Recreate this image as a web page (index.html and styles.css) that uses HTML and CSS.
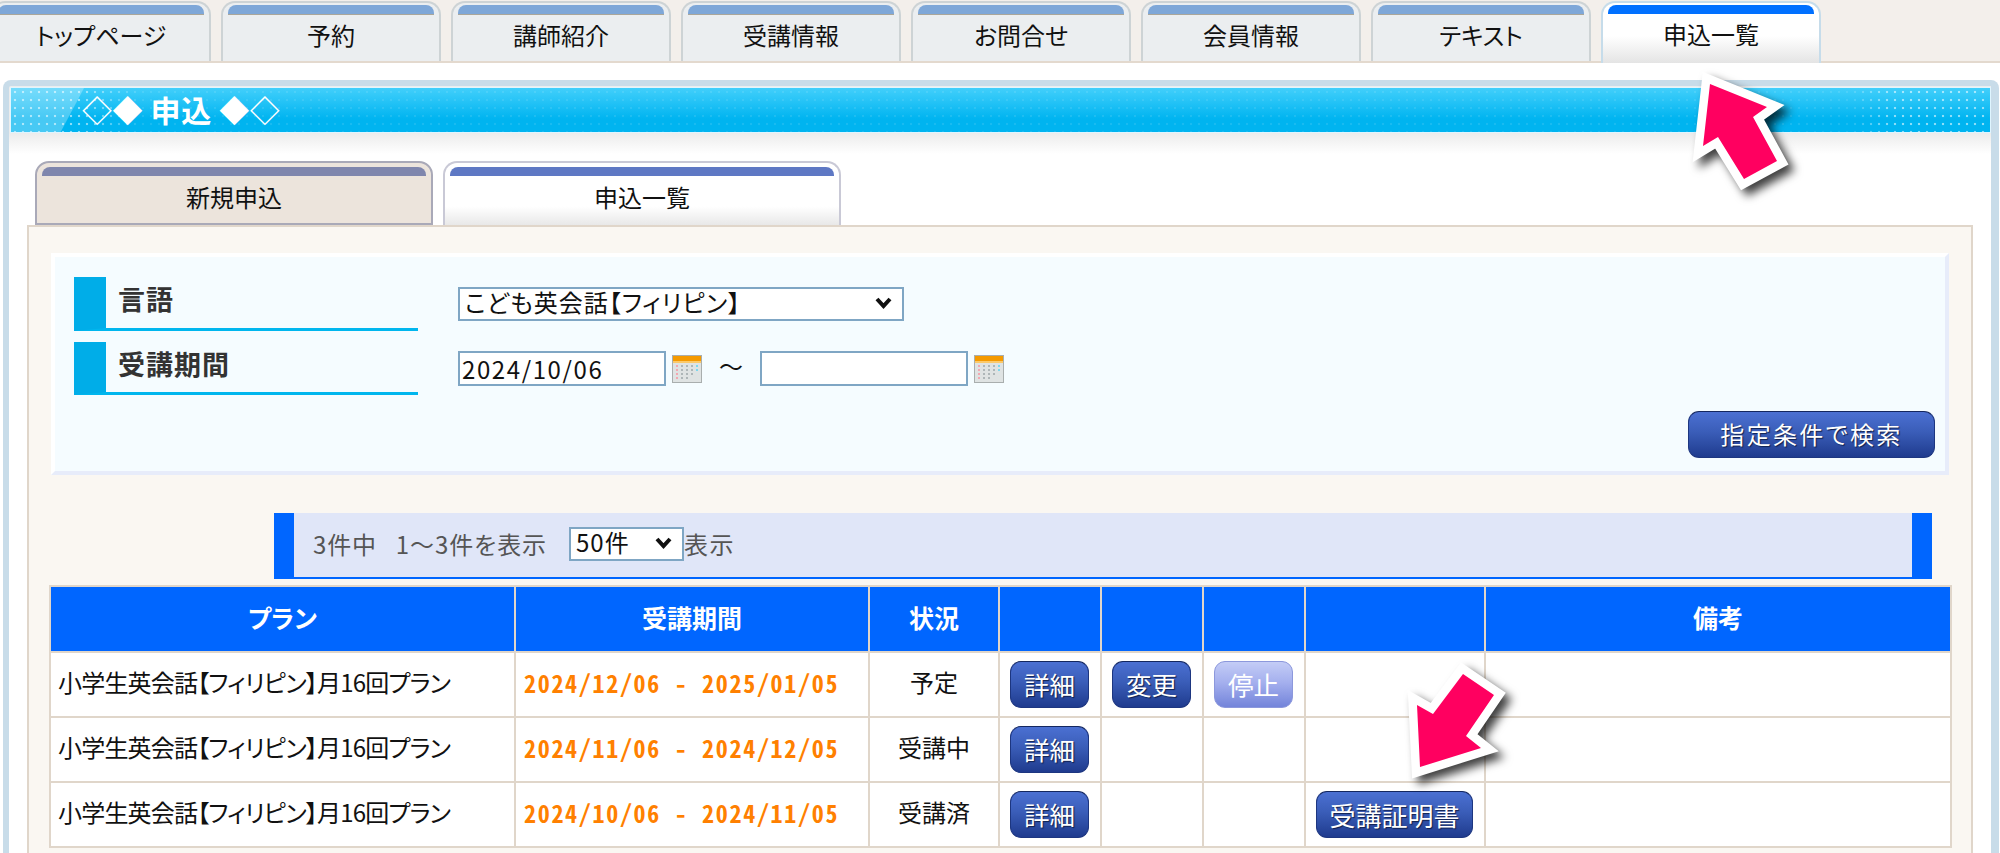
FILE: index.html
```html
<!DOCTYPE html>
<html lang="ja">
<head>
<meta charset="utf-8">
<title>申込一覧</title>
<link rel="stylesheet" href="styles.css">
</head>
<body>
<nav class="topnav">
  <a class="navtab">トップページ</a>
  <a class="navtab">予約</a>
  <a class="navtab">講師紹介</a>
  <a class="navtab">受講情報</a>
  <a class="navtab">お問合せ</a>
  <a class="navtab">会員情報</a>
  <a class="navtab">テキスト</a>
  <a class="navtab navtab-active">申込一覧</a>
</nav>
<main class="panel">
  <h1 class="title">◇◆ 申込 ◆◇</h1>
  <div class="subtabs">
    <a class="subtab">新規申込</a>
    <a class="subtab subtab-active">申込一覧</a>
  </div>
  <section class="box">
    <form class="search">
      <div class="fields">
        <div class="label">言語</div>
        <div class="ctrl ctrl-lang">
          <span class="selwrap">
            <select class="sel sel-lang"><option>こども英会話【フィリピン】</option></select>
            <svg class="chev" viewBox="0 0 17 12" aria-hidden="true"><path d="M2 2 L8.5 9 L15 2" fill="none" stroke="#111" stroke-width="4"/></svg>
          </span>
        </div>
        <div class="label">受講期間</div>
        <div class="ctrl ctrl-date">
          <input class="date" type="text" value="2024/10/06">
          <svg class="cal" viewBox="0 0 30 28" aria-hidden="true">
            <rect x="0.5" y="0.5" width="29" height="27" fill="#dfe3e3" stroke="#a9aeae"/>
            <rect x="1" y="1" width="28" height="5" fill="#f59a00"/>
            <rect x="1" y="6" width="28" height="2" fill="#fbc96a"/>
            <g class="cal-grey"><rect x="9" y="10" width="2" height="2"/><rect x="14" y="10" width="2" height="2"/><rect x="19" y="10" width="2" height="2"/><rect x="9" y="14" width="2" height="2"/><rect x="14" y="14" width="2" height="2"/><rect x="19" y="14" width="2" height="2"/><rect x="9" y="18" width="2" height="2"/><rect x="14" y="18" width="2" height="2"/><rect x="19" y="18" width="2" height="2"/><rect x="9" y="22" width="2" height="2"/><rect x="14" y="22" width="2" height="2"/></g>
            <g class="cal-red"><rect x="4" y="10" width="2" height="2"/><rect x="4" y="14" width="2" height="2"/><rect x="4" y="18" width="2" height="2"/><rect x="4" y="22" width="2" height="2"/></g>
            <g class="cal-blue"><rect x="24" y="10" width="2" height="2"/><rect x="24" y="14" width="2" height="2"/></g>
          </svg>
          <span class="tilde">～</span>
          <input class="date" type="text">
          <svg class="cal" viewBox="0 0 30 28" aria-hidden="true">
            <rect x="0.5" y="0.5" width="29" height="27" fill="#dfe3e3" stroke="#a9aeae"/>
            <rect x="1" y="1" width="28" height="5" fill="#f59a00"/>
            <rect x="1" y="6" width="28" height="2" fill="#fbc96a"/>
            <g class="cal-grey"><rect x="9" y="10" width="2" height="2"/><rect x="14" y="10" width="2" height="2"/><rect x="19" y="10" width="2" height="2"/><rect x="9" y="14" width="2" height="2"/><rect x="14" y="14" width="2" height="2"/><rect x="19" y="14" width="2" height="2"/><rect x="9" y="18" width="2" height="2"/><rect x="14" y="18" width="2" height="2"/><rect x="19" y="18" width="2" height="2"/><rect x="9" y="22" width="2" height="2"/><rect x="14" y="22" width="2" height="2"/></g>
            <g class="cal-red"><rect x="4" y="10" width="2" height="2"/><rect x="4" y="14" width="2" height="2"/><rect x="4" y="18" width="2" height="2"/><rect x="4" y="22" width="2" height="2"/></g>
            <g class="cal-blue"><rect x="24" y="10" width="2" height="2"/><rect x="24" y="14" width="2" height="2"/></g>
          </svg>
        </div>
      </div>
      <div class="actions"><button class="btn btn-search" type="button">指定条件で検索</button></div>
    </form>
    <div class="pager">
      <span class="pager-text">3件中&nbsp;&nbsp; 1～3件を表示</span>
      <span class="selwrap">
        <select class="sel sel-count"><option>50件</option></select>
        <svg class="chev" viewBox="0 0 17 12" aria-hidden="true"><path d="M2 2 L8.5 9 L15 2" fill="none" stroke="#111" stroke-width="4"/></svg>
      </span>
      <span class="pager-tail">表示</span>
    </div>
    <table class="list">
      <colgroup>
        <col class="c-plan"><col class="c-period"><col class="c-status"><col class="c-btn"><col class="c-btn"><col class="c-btn"><col class="c-cert"><col class="c-note">
      </colgroup>
      <thead>
        <tr><th>プラン</th><th>受講期間</th><th>状況</th><th></th><th></th><th></th><th></th><th>備考</th></tr>
      </thead>
      <tbody>
        <tr>
          <td class="plan">小学生英会話【フィリピン】月16回プラン</td>
          <td class="period">2024/12/06 - 2025/01/05</td>
          <td class="status">予定</td>
          <td class="act"><button class="btn" type="button">詳細</button></td>
          <td class="act"><button class="btn" type="button">変更</button></td>
          <td class="act"><button class="btn btn-off" type="button">停止</button></td>
          <td class="act"></td>
          <td></td>
        </tr>
        <tr>
          <td class="plan">小学生英会話【フィリピン】月16回プラン</td>
          <td class="period">2024/11/06 - 2024/12/05</td>
          <td class="status">受講中</td>
          <td class="act"><button class="btn" type="button">詳細</button></td>
          <td class="act"></td>
          <td class="act"></td>
          <td class="act"></td>
          <td></td>
        </tr>
        <tr>
          <td class="plan">小学生英会話【フィリピン】月16回プラン</td>
          <td class="period">2024/10/06 - 2024/11/05</td>
          <td class="status">受講済</td>
          <td class="act"><button class="btn" type="button">詳細</button></td>
          <td class="act"></td>
          <td class="act"></td>
          <td class="act"><button class="btn btn-cert" type="button">受講証明書</button></td>
          <td></td>
        </tr>
      </tbody>
    </table>
  </section>
</main>
<svg class="arrows" viewBox="0 0 2000 853" aria-hidden="true">
  <polygon class="arrow" points="1710,84 1767,107 1753,117 1777,161 1744,179 1718,137 1703,146"/>
  <polygon class="arrow" points="1463,674 1494,695 1466,736 1481,748 1420,767 1417,705 1433,714"/>
</svg>
</body>
</html>
```

FILE: styles.css
```css
* { box-sizing: border-box; }
html, body { margin: 0; padding: 0; }
body {
  position: relative;
  width: 2000px;
  height: 853px;
  overflow: hidden;
  background: #fff;
  color: #111;
  font-family: "Noto Sans CJK JP", "Noto Sans", sans-serif;
  font-size: 24px;
  line-height: 1.2;
  font-feature-settings: "palt";
}

/* top navigation */
.topnav {
  display: flex;
  gap: 10px;
  height: 63px;
  padding: 1px 0 0;
  margin-left: -9px;
  background: #f3efeb;
  border-bottom: 2px solid #e3d9ce;
}
.navtab {
  display: flex;
  flex-direction: column;
  align-items: center;
  width: 220px;
  height: 60px;
  border: 2px solid #cdd3d5;
  border-bottom: 0;
  border-radius: 14px 14px 0 0;
  background: #ebeef0;
}
.navtab::before {
  content: "";
  align-self: stretch;
  flex: none;
  height: 9px;
  margin: 2px 5px 6px;
  border-radius: 8px 8px 0 0;
  background: #7ea7d8;
  border-bottom: 1px solid #aaa69a;
}
.navtab-active {
  border-color: #c6dcea;
  background: linear-gradient(#fff 0, #fff 55%, #e4e4e4 100%);
  height: 62px;
}
.navtab-active::before {
  background: #0070ff;
  border-bottom: 0;
}

/* main panel */
.panel {
  margin: 17px 1px 0 3px;
  border: solid #c8dce9;
  border-width: 6px 8px 0 6px;
  border-radius: 8px 8px 0 0;
  height: 780px;
  background: linear-gradient(#ececec 47px, #fff 68px);
}
.title {
  position: relative;
  margin: 1px 0 0 1px;
  height: 46px;
  padding: 4px 0 0 71px;
  border: 1px solid #dff5ff;
  background: linear-gradient(#42cffb, #00b4f0 70%);
  color: #fff;
  font-size: 30px;
  font-weight: 700;
  line-height: 34px;
  letter-spacing: .6px;
  font-feature-settings: normal;
}
.title::before {
  content: "";
  position: absolute;
  inset: 0;
  background:
    linear-gradient(118deg, rgba(255,255,255,.28) 0, rgba(255,255,255,.28) 64px, transparent 65px) no-repeat 0 0 / 110px 100%,
    radial-gradient(circle, rgba(255,255,255,.55) 1.2px, transparent 1.6px) 0 0 / 8px 8px;
  -webkit-mask-image: linear-gradient(90deg, #000 0, #000 70px, rgba(0,0,0,.18) 130px, rgba(0,0,0,.18) 1840px, #000 1880px);
  mask-image: linear-gradient(90deg, #000 0, #000 70px, rgba(0,0,0,.18) 130px, rgba(0,0,0,.18) 1840px, #000 1880px);
}

/* sub tabs */
.subtabs {
  display: flex;
  gap: 10px;
  margin: 28px 0 0 26px;
  height: 64px;
}
.subtab {
  display: flex;
  flex-direction: column;
  align-items: center;
  width: 398px;
  height: 64px;
  border: 2px solid #a9a9b8;
  border-radius: 14px 14px 0 0;
  background: #ece4dc;
}
.subtab::before {
  content: "";
  align-self: stretch;
  flex: none;
  height: 9px;
  margin: 4px 5px 7px;
  border-radius: 8px 8px 0 0;
  background: #7f86ad;
}
.subtab-active {
  border-color: #c9c9d6;
  border-bottom: 0;
  background: linear-gradient(#fff 0, #fff 70%, #e8e8e8 100%);
}
.subtab-active::before { background: #5e78c4; }

/* content box */
.box {
  margin-left: 18px;
  width: 1946px;
  height: 640px;
  border: 2px solid #e0d6ca;
  background: #faf7f2;
}
.search {
  margin: 26px 0 0 22px;
  width: 1898px;
  height: 222px;
  border: 4px solid;
  border-color: #fff #e7ecfa #e7ecfa #fff;
  background: #f5fcff;
}
.fields {
  display: grid;
  grid-template-columns: 344px 1fr;
  grid-template-rows: 54px 53px;
  column-gap: 40px;
  row-gap: 11px;
  margin: 20px 0 0 19px;
}
.label {
  padding-left: 12px;
  border-left: 32px solid #00ade8;
  border-bottom: 3px solid #00b6ee;
  color: #333;
  font-size: 27px;
  font-weight: 700;
  line-height: 44px;
  letter-spacing: 1px;
}
.ctrl-lang { padding-top: 10px; }
.ctrl-date {
  display: flex;
  align-items: flex-start;
  padding-top: 9px;
}
.selwrap {
  position: relative;
  display: inline-block;
  flex: none;
  height: 34px;
}
.chev {
  position: absolute;
  right: 12px;
  top: 10px;
  width: 17px;
  height: 12px;
  pointer-events: none;
}
.sel {
  display: block;
  margin: 0;
  height: 34px;
  -webkit-appearance: none;
  appearance: none;
  background: #fff;
  border: 2px solid #7fa6c4;
  border-radius: 0;
  color: #111;
  font: inherit;
  font-feature-settings: "palt";
  line-height: 26px;
}
.sel-lang { width: 446px; padding: 0 2px 4px 5px; letter-spacing: 1px; }
.sel-count { width: 115px; padding: 0 2px 4px 5px; letter-spacing: 1px; }
.date {
  width: 208px;
  height: 35px;
  margin: 0;
  padding: 0 2px;
  background: #fff;
  border: 2px solid #7fa6c4;
  border-radius: 0;
  color: #111;
  font: inherit;
  letter-spacing: 1.6px;
}
.cal { flex: none; width: 30px; height: 28px; margin: 4px 0 0 6px; }
.cal-grey { fill: #aeb6b8; }
.cal-red { fill: #f3a7b0; }
.cal-blue { fill: #7bd7ee; }
.tilde { width: 58px; text-align: center; line-height: 30px; }
.actions {
  display: flex;
  justify-content: flex-end;
  margin-top: 16px;
  padding-right: 10px;
}

/* buttons */
.btn {
  display: block;
  width: 79px;
  height: 47px;
  margin: 0;
  padding: 0;
  border: 1px solid #1d3680;
  border-top-color: #14275f;
  border-radius: 11px;
  background: linear-gradient(#4b70d2 0, #3a5db8 45%, #1f3b8e 100%);
  color: #fff;
  font: inherit;
  font-size: 25.5px;
  font-feature-settings: "palt";
  text-shadow: 1px 1px 1px #10204d;
}
.btn-search { width: 247px; font-size: 24px; letter-spacing: 2.3px; }
.btn-cert { width: 157px; font-size: 26px; }
.btn-off {
  border-color: #8c98dc;
  background: linear-gradient(#c3ccf6 0, #a5b0ee 45%, #7384da 100%);
  text-shadow: none;
}

/* pager */
.pager {
  display: flex;
  align-items: center;
  margin: 38px 0 0 245px;
  width: 1658px;
  height: 66px;
  padding: 0 0 2px 19px;
  border: solid #0066ff;
  border-width: 0 20px 2px 20px;
  background: #e0e6f8;
  color: #555;
}
.pager-text { width: 256px; flex: none; letter-spacing: .9px; }
.pager-tail { letter-spacing: 1.5px; }

/* table */
.list {
  table-layout: fixed;
  width: 1901px;
  margin: 6px 0 0 20px;
  border-collapse: collapse;
  background: #fff;
}
.c-plan { width: 465px; }
.c-period { width: 354px; }
.c-status { width: 130px; }
.c-btn { width: 102px; }
.c-cert { width: 180px; }
.c-note { width: 466px; }
.list th, .list td {
  border: 2px solid #e0d6ca;
  padding: 0;
}
.list th {
  height: 66px;
  padding-bottom: 4px;
  background: #0066ff;
  color: #fff;
  font-size: 25px;
  font-weight: 700;
  text-align: center;
}
.list td { height: 65px; }
.list .plan { padding: 0 0 5px 7px; letter-spacing: -.8px; }
.list .period {
  padding: 0 0 2px 8px;
  color: #ff8000;
  font-weight: 700;
  font-feature-settings: "hwid";
  letter-spacing: 1.7px;
}
.list .status { padding-bottom: 4px; text-align: center; }
.list .act { padding-left: 10px; }

/* annotation arrows */
.arrows {
  position: absolute;
  left: 0;
  top: 0;
  width: 2000px;
  height: 853px;
  pointer-events: none;
  filter: drop-shadow(6px 6px 5px rgba(0,0,0,.75));
}
.arrow {
  fill: #ff0060;
  stroke: #fff;
  stroke-width: 17px;
  stroke-linejoin: miter;
  stroke-miterlimit: 10;
  paint-order: stroke;
}
```
